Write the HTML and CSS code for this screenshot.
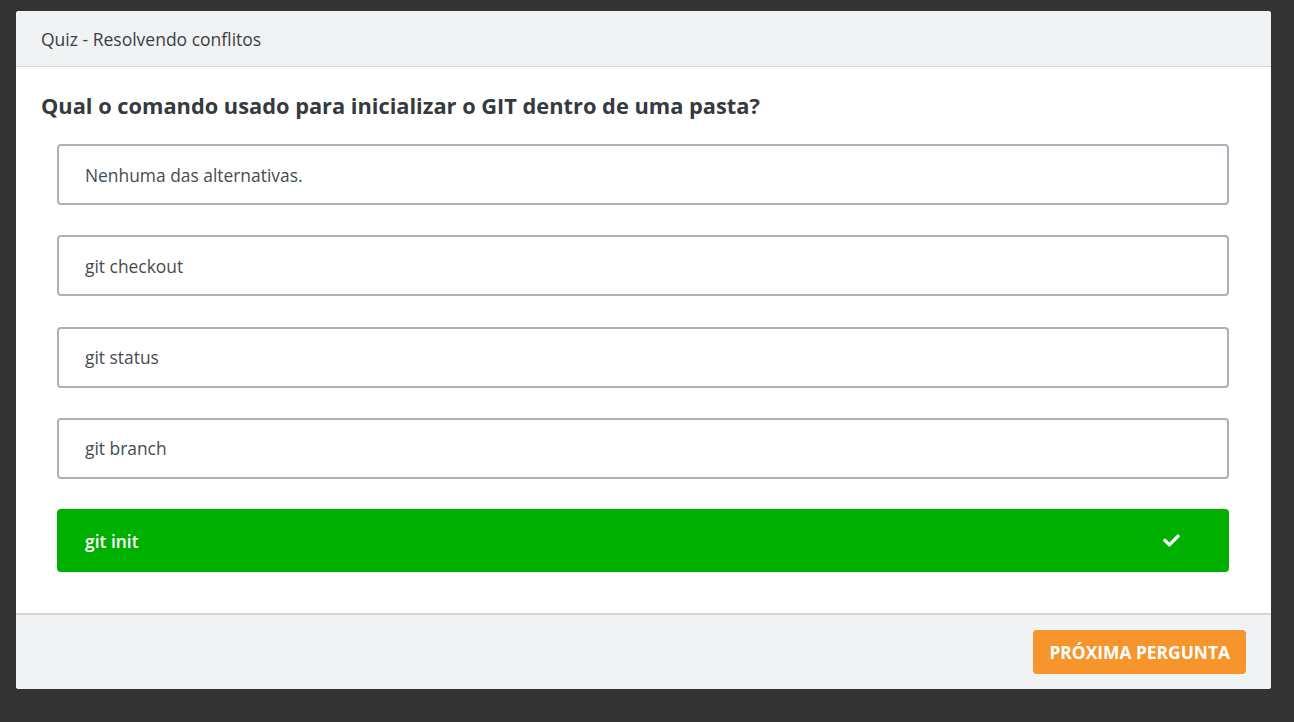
FILE: index.html
```html
<!DOCTYPE html>
<html lang="pt">
<head>
<meta charset="utf-8">
<title>Quiz</title>
<link rel="stylesheet" href="styles.css">
</head>
<body>
<div class="modal">
  <div class="modal-header">Quiz - Resolvendo conflitos</div>
  <div class="modal-body">
    <h2 class="question">Qual o comando usado para inicializar o GIT dentro de uma pasta?</h2>
    <ul class="options">
      <li class="option">Nenhuma das alternativas.</li>
      <li class="option">git checkout</li>
      <li class="option">git status</li>
      <li class="option">git branch</li>
      <li class="option correct">git init
        <svg class="check" viewBox="0 0 512 512" width="17" height="17"><path fill="#fff" d="M173.9 439.4L7.5 273c-10-10-10-26.2 0-36.2l36.2-36.2c10-10 26.2-10 36.2 0L192 312.7 432.1 72.6c10-10 26.2-10 36.2 0l36.2 36.2c10 10 10 26.2 0 36.2L210.1 439.4c-10 10-26.2 10-36.2 0z"/></svg>
      </li>
    </ul>
  </div>
  <div class="modal-footer">
    <button class="btn-next">Próxima pergunta</button>
  </div>
</div>
</body>
</html>
```

FILE: styles.css
```css
html, body {
  margin: 0;
  padding: 0;
}
body {
  background: #333333;
  font-family: "Open Sans", "Liberation Sans", sans-serif;
  color: #343a40;
  padding: 11px 23px 0 16px;
  height: 722px;
  box-sizing: border-box;
}
.modal {
  background: #ffffff;
  border-radius: 3px;
  width: 1255px;
  height: 678px;
  display: flex;
  flex-direction: column;
  overflow: hidden;
}
.modal-header {
  background: #f1f2f4;
  border-bottom: 1px solid #d3d6da;
  height: 56px;
  box-sizing: border-box;
  padding: 0 25px;
  display: flex;
  align-items: center;
  font-size: 17.5px;
  color: #3a3f44;
}
.modal-body {
  flex: 1;
  padding: 24px 25px 0 25px;
}
.question {
  margin: 0;
  font-size: 21.8px;
  line-height: 30px;
  font-weight: 700;
  color: #343a40;
}
.options {
  list-style: none;
  margin: 23px 0 0 0;
  padding: 0 17px 0 16px;
  display: flex;
  flex-direction: column;
  gap: 30.3px;
}
.option {
  height: 61px;
  box-sizing: border-box;
  border: 2px solid #aab1b9;
  border-radius: 4px;
  padding: 0 24px 0 26px;
  display: flex;
  align-items: center;
  justify-content: space-between;
  font-size: 17.4px;
  color: #464b51;
}
.option.correct {
  background: #00b000;
  border-color: #00b000;
  color: #ffffff;
  height: 63px;
  font-weight: 600;
  padding-right: 47px;
}
.check {
  display: block;
}
.modal-footer {
  background: #f1f2f4;
  border-top: 2px solid #d3d6da;
  height: 76px;
  box-sizing: border-box;
  padding: 0 25px;
  display: flex;
  align-items: center;
  justify-content: flex-end;
}
.btn-next {
  background: #f7942c;
  color: #ffffff;
  border: none;
  border-radius: 4px;
  height: 44px;
  padding: 0 16px;
  font-family: "Open Sans", "Liberation Sans", sans-serif;
  font-size: 17.4px;
  font-weight: 700;
  text-transform: uppercase;
  cursor: pointer;
}
```
